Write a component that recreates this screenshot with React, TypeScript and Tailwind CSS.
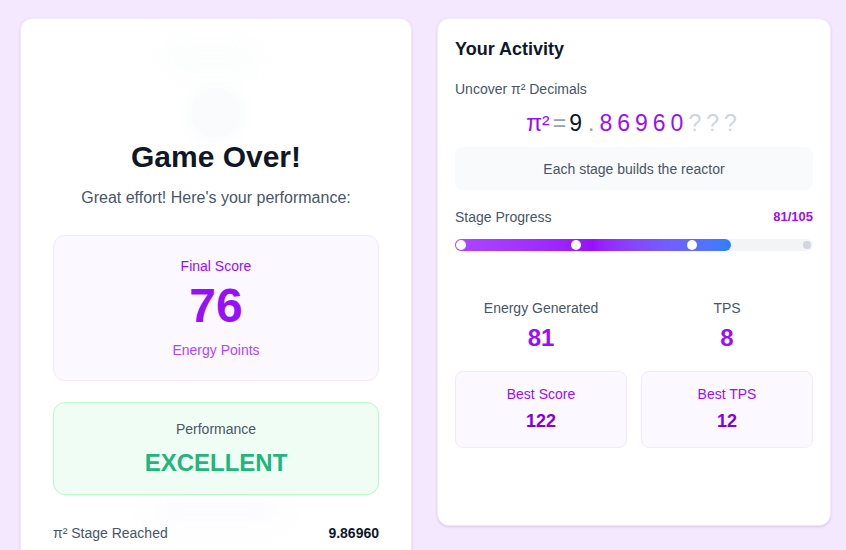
import React from "react";

const font = { fontFamily: '"Liberation Sans", Arial, sans-serif' };

function StatCol({ label, value }: { label: string; value: string }) {
  return (
    <div className="flex flex-col items-center">
      <div className="text-sm leading-5 text-gray-600">{label}</div>
      <div className="mt-1 text-2xl leading-8 font-bold text-purple-600">{value}</div>
    </div>
  );
}

function BestBox({ label, value }: { label: string; value: string }) {
  return (
    <div className="flex flex-col items-center rounded-lg border border-purple-100 bg-purple-50/70 pt-3 pb-3">
      <div className="text-sm leading-5 text-purple-600">{label}</div>
      <div className="mt-[3px] text-lg leading-7 font-bold text-purple-700">{value}</div>
    </div>
  );
}

export default function App() {
  const progress = (81 / 105) * 100;

  return (
    <div className="h-[550px] overflow-hidden bg-purple-100" style={font}>
      <div className="grid grid-cols-[392px_394px] items-start gap-[25px] pl-5 pt-[18px]">
        {/* GAME OVER CARD */}
        <div className="relative overflow-hidden rounded-xl border border-purple-100 bg-white px-8 pt-8 pb-12 shadow-sm">
          {/* faint decorations */}
          <div className="pointer-events-none absolute left-[140px] top-[24px] h-[28px] w-[100px] rounded-full bg-gray-100/30 blur-md" />
          <div className="pointer-events-none absolute left-[125px] top-[478px] h-[28px] w-[140px] rounded-full bg-purple-50/50 blur-md" />

          <div className="relative flex flex-col items-center">
            <div className="mt-[37px] h-[50px] w-[50px] rounded-full bg-slate-50/70 shadow-[0_0_12px_6px_rgba(248,250,252,0.6)]" />
            <h1 className="mt-px text-3xl leading-9 font-bold text-gray-900">Game Over!</h1>
            <p className="mt-[11px] text-base leading-6 text-gray-600">
              Great effort! Here's your performance:
            </p>
          </div>

          {/* FINAL SCORE */}
          <div className="relative mt-[25px] flex flex-col items-center rounded-xl border border-purple-100 bg-purple-50/70 pt-5 pb-5">
            <div className="text-sm leading-5 text-purple-600">Final Score</div>
            <div className="mt-[6px] text-5xl leading-none font-bold text-purple-600">76</div>
            <div className="mt-[10px] text-sm leading-5 text-purple-500">Energy Points</div>
          </div>

          {/* PERFORMANCE */}
          <div className="relative mt-[21px] flex flex-col items-center rounded-xl border border-green-200 bg-green-50 pt-4 pb-[15px]">
            <div className="text-sm leading-5 text-gray-600">Performance</div>
            <div className="mt-2 text-2xl leading-8 font-bold text-[#24b47e]">EXCELLENT</div>
          </div>

          {/* STATS */}
          <div className="relative mt-[28px] flex items-center justify-between text-sm leading-5">
            <span className="text-gray-600">π² Stage Reached</span>
            <span className="font-bold text-gray-900">9.86960</span>
          </div>
        </div>

        {/* ACTIVITY CARD */}
        <div className="rounded-xl border border-purple-100 bg-white px-[17px] pt-4 pb-[77px] shadow-sm">
          <h2 className="text-lg leading-7 font-bold text-gray-900">Your Activity</h2>

          <div className="mt-4 text-sm leading-5 text-gray-600">Uncover π² Decimals</div>

          <div className="mt-2 flex items-baseline justify-center text-[23px] leading-8">
            <span className="text-purple-600">π²</span>
            <span className="mx-[3px] text-gray-400">=</span>
            <span className="text-gray-900">9</span>
            <span className="ml-[6px] mr-[5px] text-gray-400">.</span>
            <span className="tracking-[5px] text-purple-600">86960</span>
            <span className="tracking-[5px] text-gray-300">???</span>
          </div>

          <div className="mt-2 flex h-[43px] items-center justify-center rounded-lg bg-gray-50 text-sm text-gray-600">
            Each stage builds the reactor
          </div>

          <div className="mt-[17px] flex items-center justify-between text-sm leading-5">
            <span className="text-gray-600">Stage Progress</span>
            <span className="text-[13px] font-bold text-purple-600">81/105</span>
          </div>

          <div className="relative mt-3 h-3 rounded-full bg-gray-100">
            <div
              className="h-3 rounded-full bg-linear-to-r from-purple-500 via-purple-600 to-blue-500"
              style={{ width: `${progress}%` }}
            />
            <div className="absolute inset-0 flex items-center justify-between px-px">
              <span className="h-[10px] w-[10px] rounded-full bg-white" />
              <span className="h-[10px] w-[10px] rounded-full bg-white" />
              <span className="h-[10px] w-[10px] rounded-full bg-white" />
              <span className="flex h-[10px] w-[10px] items-center justify-center">
                <span className="h-2 w-2 rounded-full bg-gray-300" />
              </span>
            </div>
          </div>

          <div className="mt-[47px] grid grid-cols-2 gap-[14px]">
            <StatCol label="Energy Generated" value="81" />
            <StatCol label="TPS" value="8" />
          </div>

          <div className="mt-[17px] grid grid-cols-2 gap-[14px]">
            <BestBox label="Best Score" value="122" />
            <BestBox label="Best TPS" value="12" />
          </div>
        </div>
      </div>
    </div>
  );
}
